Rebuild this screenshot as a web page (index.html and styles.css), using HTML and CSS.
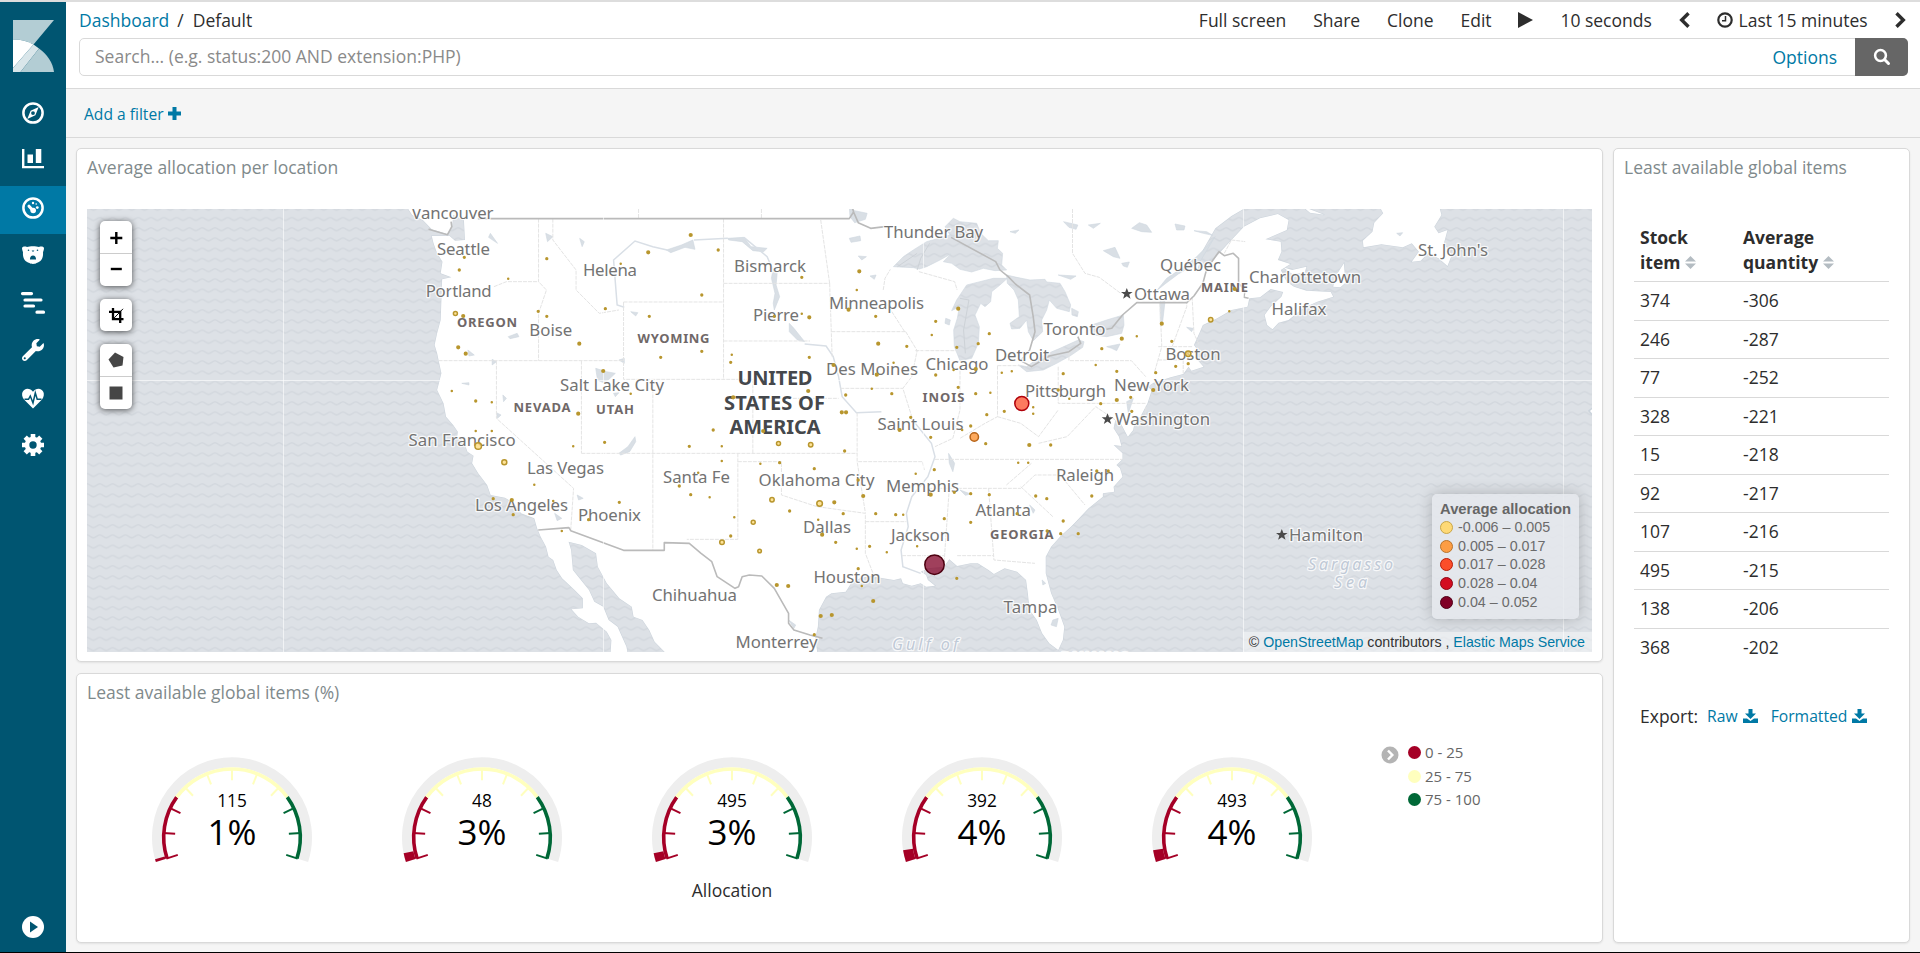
FILE: index.html
```html
<!DOCTYPE html>
<html lang="en">
<head>
<meta charset="utf-8">
<title>Default - Dashboard</title>
<link rel="stylesheet" href="styles.css">
</head>
<body>
<div class="app">
  <nav class="sidebar">
    <div class="logo">
      <svg width="41" height="52" viewBox="0 0 41 52"><path fill="#b3cdd4" d="M0 0H41L20.500 24.500A40 40 0 0 0 0 19.500Z"/><path fill="#fff" d="M0 19.500A40 40 0 0 1 20.500 24.500L0 48Z"/><path fill="#d9e6ea" d="M20.500 24.500L26 28.500L7.500 52H0V48Z"/><path fill="#b3cdd4" d="M26 28.500C34 34 40 43 41 52H7.500Z"/></svg>
    </div>
    <a class="nav-item"><svg viewBox="0 0 22 22"><circle cx="11" cy="11" r="9.600" fill="none" stroke="#fff" stroke-width="2.500"/><path fill="#fff" fill-rule="evenodd" d="M16.700 5L13.400 13.300L5.300 17L8.600 8.700ZM11 9.200A1.900 1.900 0 1 0 11 13A1.900 1.900 0 1 0 11 9.200Z"/></svg></a>
    <a class="nav-item"><svg viewBox="0 0 22 22"><path fill="#fff" d="M0 0H2.400V17H22V19.300H0ZM5.500 5.500H11V14H5.500ZM13.800 0H19.300V14H13.800Z"/></svg></a>
    <a class="nav-item active"><svg viewBox="0 0 22 22"><circle cx="11" cy="11" r="9.600" fill="none" stroke="#fff" stroke-width="2.500"/><path stroke="#fff" stroke-width="3" stroke-linecap="round" d="M10.500 13L7 9.200"/><g fill="#fff"><circle cx="11.200" cy="13.500" r="2.800"/><circle cx="11" cy="6" r="1.200"/><circle cx="14.200" cy="7" r=".8"/><circle cx="15.300" cy="10.600" r="1.400"/></g></svg></a>
    <a class="nav-item"><svg viewBox="0 0 22 22"><path fill="#fff" fill-rule="evenodd" d="M0 4C0 2.500 3 2 5 2.900C8 1.900 14 1.900 17 2.900C19 2 22 2.500 22 4C22 6 21 7.500 21 8.500C21.500 14 19 18 14.500 19C13 20.200 9 20.200 7.500 19C3 18 .5 14 1 8.500C1 7.500 0 6 0 4ZM6.500 5.500A.8 .8 0 1 0 6.500 7.100A.8 .8 0 1 0 6.500 5.500ZM15.500 5.500A.8 .8 0 1 0 15.500 7.100A.8 .8 0 1 0 15.500 5.500ZM9.600 6.500L11 8L12.400 6.500ZM11 11.500C9 11.500 7.800 13.500 8 15.500H14C14.200 13.500 13 11.500 11 11.500Z"/></svg></a>
    <a class="nav-item"><svg viewBox="0 0 22 22"><path stroke="#fff" stroke-width="3.200" stroke-linecap="round" d="M.5 1.600H9.500M3 8H19M3 14H11.500M15 20.200H21.500"/></svg></a>
    <a class="nav-item"><svg viewBox="0 0 512 512"><path fill="#fff" d="M507.700 109.100c-2.200-9-13.500-12.100-20.100-5.500l-74.400 74.400-67.900-11.300-11.300-67.900 74.400-74.400c6.600-6.600 3.400-17.900-5.700-20.200-47.400-11.700-99.600.9-136.600 37.900-39.600 39.600-50.500 97.100-34 147.200L18.700 402.800c-25 25-25 65.500 0 90.500s65.500 25 90.500 0l213.200-213.200c50.100 16.700 107.500 5.700 147.400-34.200 37-37.100 49.700-89.300 37.900-136.800zM64 472c-13.300 0-24-10.800-24-24s10.800-24 24-24 24 10.700 24 24-10.800 24-24 24z"/></svg></a>
    <a class="nav-item"><svg viewBox="0 0 22 22"><path fill="#fff" d="M11 21.500L2 12.500C-3 5.500 3-.5 8.500 2.500Q10 3.300 11 4.800Q12 3.300 13.500 2.500C19-.5 25 5.500 20 12.500Z"/><path fill="none" stroke="#005571" stroke-width="1.500" d="M2.500 12.300H6.500L8.300 9L11 16L13.300 6L15.200 12.300H19.500"/></svg></a>
    <a class="nav-item"><svg viewBox="0 0 22 22"><circle cx="11" cy="11" r="6" fill="none" stroke="#fff" stroke-width="4.600"/><path stroke="#fff" stroke-width="4.600" d="M11 0V4M11 18V22M0 11H4M18 11H22M3.200 3.200L6 6M16 16L18.800 18.800M3.200 18.800L6 16M16 6L18.800 3.200"/></svg></a>
    <a class="nav-item last"><svg viewBox="0 0 22 22"><circle cx="11" cy="11" r="11" fill="#fff"/><path fill="#005571" d="M8 5.500L16 11L8 16.500Z"/></svg></a>
  </nav>
  <main class="main">
    <header class="topbar">
      <div class="toprow">
        <div class="crumbs"><a>Dashboard</a><span class="slash">/</span><span>Default</span></div>
        <div class="menu">
          <span>Full screen</span><span>Share</span><span>Clone</span><span>Edit</span>
          <svg width="15" height="16" viewBox="0 0 15 16"><path fill="#2d2d2d" d="M0 0L15 8L0 16Z"/></svg>
          <span>10 seconds</span>
          <svg width="11" height="16" viewBox="0 0 11 16"><path fill="none" stroke="#2d2d2d" stroke-width="3.400" d="M9.500 1.200L2.700 8L9.500 14.800"/></svg>
          <span class="time"><svg width="16" height="16" viewBox="0 0 16 16"><circle cx="8" cy="8" r="6.700" fill="none" stroke="#2d2d2d" stroke-width="2.200"/><path fill="none" stroke="#2d2d2d" stroke-width="1.500" d="M8.500 4V8.700H5"/></svg>Last 15 minutes</span>
          <svg width="11" height="16" viewBox="0 0 11 16"><path fill="none" stroke="#2d2d2d" stroke-width="3.400" d="M1.500 1.200L8.300 8L1.500 14.800"/></svg>
        </div>
      </div>
      <div class="search">
        <div class="query">Search... (e.g. status:200 AND extension:PHP)</div>
        <a class="options">Options</a>
        <div class="go"><svg width="18" height="18" viewBox="0 0 18 18"><circle cx="7.500" cy="7.500" r="5.400" fill="none" stroke="#fff" stroke-width="2.500"/><path stroke="#fff" stroke-width="3" stroke-linecap="round" d="M11.800 11.800L15.500 15.500"/></svg></div>
      </div>
    </header>
    <div class="filterbar"><a>Add a filter</a><svg width="13" height="13" viewBox="0 0 13 13"><path stroke="#0079a5" stroke-width="4" d="M6.500 0V13M0 6.500H13"/></svg></div>
    <div class="grid">
      <div class="left">
        <section class="panel map-panel">
          <h2>Average allocation per location</h2>
          <div class="map">
            <svg class="canvas" width="1505" height="443" viewBox="87 209 1505 443">
              <defs>
                <pattern id="sea" width="12.800" height="10.240" patternUnits="userSpaceOnUse" x="87" y="214"><rect width="12.800" height="10.240" fill="#dde1e6"/><path d="M0 3.500C2 3.500 4.500 6.500 6.400 6.500S10.800 3.500 12.800 3.500" fill="none" stroke="#d3d8de" stroke-width="1.600"/></pattern>
                <pattern id="lake-sea" href="#sea" patternTransform="scale(3)"/>
                <g id="land">
                  <path transform="translate(80 190) scale(.35714 .33333)" d="M915 50L930 75L960 90L985 118L1030 133L1042 110L1045 75L1075 90L1078 150L1050 152L1035 138L985 138L990 160L1000 190L1015 215L1010 250L1040 262L1014 268L1012 330L1010 390L1000 430L993 465L1000 490L1005 515L1012 550L1005 580L1000 600L1018 640L1025 680L1045 705L1058 725L1056 740L1070 750L1078 765L1085 785L1102 797L1098 820L1115 850L1140 885L1150 915L1190 923L1215 940L1235 970L1272 985L1280 1015L1290 1040L1305 1070L1312 1100L1325 1110L1335 1140L1350 1165L1385 1200L1408 1225L1408 1255L1376 1258L1395 1280L1425 1300L1445 1298L1475 1325L1488 1350L1485 1400H1535L1530 1370L1505 1310L1480 1290L1465 1250L1440 1235L1425 1200L1395 1160L1380 1140L1375 1080L1368 1055L1405 1065L1445 1090L1450 1130L1475 1180L1510 1225L1545 1250L1550 1280L1575 1290L1594 1320L1609 1355L1650 1400H1900V50Z"/>
                  <path transform="translate(560 190) scale(.35714 .33333)" d="M500 50V1400H722L715 1345L722 1310L725 1260L745 1220L760 1210L800 1205L815 1180L840 1165L870 1158L905 1165L935 1170L955 1165L960 1180L985 1187L1010 1180L1025 1190L1050 1187L1030 1170L1025 1155L1010 1145L1030 1135L1075 1130L1090 1108L1112 1128L1150 1120L1170 1120L1200 1140L1215 1152L1245 1135L1280 1145L1305 1170L1310 1210L1315 1260L1335 1290L1350 1330L1370 1360L1395 1380L1408 1350L1412 1310L1395 1260L1375 1210L1360 1150L1360 1100L1375 1070L1400 1040L1440 1000L1480 955L1520 920V50Z"/>
                  <path transform="translate(1060 190) scale(.35714 .33333)" d="M-50 50V1080L0 1037L30 1010L60 975L75 945L100 935L120 910L152 905L150 890L175 860L168 835L158 825L175 808L175 790L150 765L172 768L165 740L150 715L155 690L170 700L190 740L205 720L210 690L225 680L245 640L257 600L245 590L262 578L310 562L345 552L360 530L368 542L402 530L385 510L385 480L375 465L390 430L400 405L440 385L480 360L525 350L530 325L560 322L590 297L625 306L620 320L590 350L573 375L580 405L595 418L612 398L640 390L680 355L720 335L765 320L758 306L690 302L655 290L635 275L618 240L645 222L610 210L620 185L618 155L575 148L635 120L640 90L610 72L560 85L515 110L480 150L450 185L425 215L385 240L400 180L435 115L480 78L525 50Z"/>
                  <path transform="translate(1060 190) scale(.35714 .33333)" d="M765 290L770 262L795 220L797 250L803 275L785 292ZM625 232L650 240L690 230L685 248L650 252ZM680 50L740 74L700 68ZM895 50L905 70L880 98L875 125L848 152L850 172L900 163L960 172L985 160L1005 185L985 215L1010 212L1030 190L1060 205L1085 228L1097 195L1075 160L1085 120L1060 130L1048 110L1068 75L1062 50Z"/>
                  <path d="M1590 411l6 -5v12z"/>
                </g>
              </defs>
              <rect x="87" y="209" width="1505" height="443" fill="url(#sea)"/>
              <use href="#land" class="coast"/>
              <use href="#land" class="ground"/>
              <g class="lakes big" transform="translate(860 200) scale(.33333)">
                <path d="M100 200L130 170L160 150L200 125L270 105L255 80L280 55L300 65L350 70L362 100L385 122L415 122L412 145L428 160L425 195L440 210L405 212L370 205L335 216L300 208L275 190L250 185L272 162L240 180L200 200L178 207L160 203Z"/>
                <path d="M275 332L290 300L320 255L360 245L400 235L442 235L420 255L395 275L392 305L375 320L362 310L345 345L358 380L355 430L335 475L300 482L283 440L281 390L292 355L298 320Z"/>
                <path d="M440 225L470 232L510 240L555 238L560 246L600 250L615 275L632 315L628 335L590 325L568 300L560 330L545 360L548 395L520 422L505 395L500 360L480 385L455 387L450 370L478 350L475 300L462 270L442 250ZM635 325L655 335L652 350L636 345Z"/>
                <path d="M475 495L500 500L530 478L560 462L600 445L655 420L672 425L668 442L630 468L590 490L550 510L500 515Z"/>
                <path d="M690 390L695 375L740 360L790 345L792 375L785 400L740 410L700 405Z"/>
              </g>
              <g class="lakes" transform="translate(560 190) scale(.35714 .33333)">
                <path d="M810 50L825 62L860 70L855 88L825 98L812 80ZM810 145L840 138L842 152L815 157ZM835 198L858 200L845 210ZM868 258L885 255L880 268ZM1410 95L1450 105L1445 118L1425 112ZM1080 385L1093 390L1090 405L1078 400ZM1260 125L1285 120L1275 130ZM1395 255L1445 258L1430 268Z"/>
                <path d="M298 180L340 165L372 150L378 178L350 172L310 188ZM470 145L515 142L535 170L580 175L570 185L540 182L510 155L472 150ZM596 240L608 250L605 285L615 320L600 360L597 340L602 310L592 265ZM642 400L655 415L685 455L665 450L642 425ZM100 535L130 545L155 550L125 580L105 570ZM165 790L190 770L210 740L212 755L195 785L170 795ZM1088 790L1105 820L1100 845L1090 820ZM1315 945L1330 960L1325 970ZM1120 900L1150 912L1135 916ZM198 365L218 368L212 378ZM165 510L180 505V520ZM55 145L68 155L62 170ZM1380 1290L1395 1285L1390 1310L1375 1305ZM1350 1170L1360 1180L1352 1185ZM-195 130L-175 160L-200 142ZM-40 130L-20 140L-35 155ZM-145 440L-120 430L-115 440L-140 446ZM-190 508L-178 515L-190 525ZM-275 580L-255 578V585ZM-160 615L-150 625L-158 635ZM-178 668L-165 675L-175 685ZM-258 480L-240 495L-255 498ZM48 915L65 925L52 930ZM-15 970L5 985L-8 992ZM150 610L165 608L155 620ZM640 1290L660 1305L655 1315Z"/>
              </g>
              <g class="lakes" transform="translate(1100 200) scale(.33333)">
                <path d="M325 135L345 110L300 185L235 222L195 252L170 272L200 235L245 205L290 170ZM180 305L195 305L188 365L181 368ZM95 85L118 68L140 75L155 97L125 95ZM225 72L255 78L252 90L230 90ZM10 152L45 142L60 175L40 170ZM65 190L88 186L82 202L70 198ZM282 92L320 95L338 106L310 100ZM260 382L280 385L275 395ZM20 440L60 432L50 452L35 445ZM1 70L-20 85L-35 75ZM890 100L908 98L900 108ZM80 605L100 595L85 640Z"/>
              </g>
              <g class="rivers" transform="translate(560 190) scale(.35714 .33333)">
                <path d="M300 180L260 170L210 153L150 210L160 345L180 352M375 150L470 145M515 142L580 200L596 240M685 462L745 468L765 500L780 560L790 620L830 668L900 665M980 680L1040 760L1050 800L1030 860L985 920L970 970L975 1010L955 1080L960 1130L1010 1150"/>
              </g>
              <g class="states" transform="translate(560 190) scale(.35714 .33333)">
                <path d="M-60 86V275L-38 300L-60 370V512M-20 86V150L45 240L45 300L110 370L165 360M-185 290L-150 275H-60M-340 512H178M178 336H458M178 336V568H540M458 86V568M458 280H755M458 453H700M60 512V790M-178 512V685L38 895L30 1020M60 790H832M260 568V1081M540 568V790M540 625H780M498 790V1048H355M498 815H620V915L720 950L855 970V1090L880 1160M832 668V815L855 968M835 815H1015L1020 840M785 595H960M760 425H968M755 280L730 90M755 280L762 500M995 482H1110M968 425L1000 482L985 560L960 595L985 680M905 300L910 265L925 238M1005 245L1105 275L1112 300M965 425L908 330M1120 527V660L1100 745L1050 770M1225 527V680L1190 700L1120 745M1225 527H1290M1395 530V640H1640M1425 485V512H1600L1640 560M1050 808H1575M1030 895H1290L1330 855H1400L1470 945M1250 885L1320 820M1090 895L1075 1125M1200 895L1215 1110L1330 1120M958 1097H1075M1112 1097H1215M855 995H970M220 57V86M564 57V86M1435 57V190L1470 250L1510 262L1570 310M1225 680L1290 700L1340 740L1395 660M1340 760L1420 740L1500 650L1555 690M1680 340L1685 470L1665 545M1714 470L1755 350V338M1770 320L1775 430L1790 465M1675 470H1770M1675 510H1745V550M1860 190L1880 150L1920 155M1640 650V720M1290 890L1380 980"/>
              </g>
              <g class="borders" transform="translate(560 190) scale(.35714 .33333)">
                <path d="M-368 118L-315 134L-303 110L-305 95M-230 86H810L822 66L818 50M822 66L835 98L870 115L910 110M1095 142L1220 215L1232 240L1255 260L1275 282L1315 315L1325 380L1330 425L1315 480L1290 512L1320 530L1370 498L1425 485L1458 460L1450 440M1530 418L1545 415L1575 375L1615 338H1755L1775 318L1800 280L1810 240L1825 215L1845 185L1860 197L1885 190L1900 205V280L1918 300L1915 322L1928 325M-61 1020L25 1013L30 1022L178 1081H292V1058L362 1060L395 1090L425 1115L440 1160L490 1195L500 1190L510 1160L530 1155L565 1158L600 1195L640 1270L640 1300L655 1320L700 1335L735 1345"/>
                <path class="thin" d="M1135 490L1130 420L1145 330L1120 325M945 230L1000 190M1000 240L1010 205L1035 160"/>
              </g>
              <path class="tiles" d="M283.500 209V652M603.500 209V652M923.500 209V652M1243.500 209V652M1563.500 209V652M87 380.500H1592"/>
              <g class="city">
                <text x="411.400" y="219.300" textLength="82">Vancouver</text><text x="437" y="254.700" textLength="53">Seattle</text><text x="425.700" y="297.300" textLength="66">Portland</text><text x="582.900" y="276" textLength="54">Helena</text><text x="529.300" y="336" textLength="43">Boise</text><text x="560" y="390.700" textLength="104">Salt Lake City</text><text x="408.600" y="445.700" textLength="107">San Francisco</text><text x="527" y="474.300" textLength="77">Las Vegas</text><text x="475" y="511" textLength="93">Los Angeles</text><text x="578" y="520.700" textLength="63">Phoenix</text><text x="734" y="271.700" textLength="72">Bismarck</text><text x="753" y="321.300" textLength="46">Pierre</text><text x="829" y="309" textLength="95">Minneapolis</text><text x="884" y="238" textLength="99">Thunder Bay</text><text x="826" y="375" textLength="92">Des Moines</text><text x="925.500" y="369.700" textLength="63">Chicago</text><text x="995" y="361" textLength="54">Detroit</text><text x="1043.500" y="335" textLength="62">Toronto</text><text x="1025" y="396.700" textLength="81">Pittsburgh</text><text x="877.500" y="430.300" textLength="86">Saint Louis</text><text x="663" y="482.700" textLength="67">Santa Fe</text><text x="758.500" y="486.300" textLength="116">Oklahoma City</text><text x="886" y="492.300" textLength="73">Memphis</text><text x="975.400" y="516" textLength="55.500">Atlanta</text><text x="1056" y="481.300" textLength="58">Raleigh</text><text x="803" y="532.700" textLength="48">Dallas</text><text x="891" y="540.700" textLength="59">Jackson</text><text x="813.500" y="583.300" textLength="67">Houston</text><text x="652" y="601" textLength="85">Chihuahua</text><text x="735.500" y="648" textLength="82">Monterrey</text><text x="1003.500" y="613" textLength="54">Tampa</text><text x="1160" y="271.300" textLength="61">Québec</text><text x="1249" y="283.300" textLength="112">Charlottetown</text><text x="1134" y="300" textLength="56">Ottawa</text><text x="1271.500" y="315.300" textLength="55">Halifax</text><text x="1165.500" y="360.300" textLength="55">Boston</text><text x="1114" y="391.300" textLength="75">New York</text><text x="1115" y="425.300" textLength="95">Washington</text><text x="1289" y="540.700" textLength="74">Hamilton</text><text x="1418" y="255.700" textLength="70">St. John's</text>
              </g>
              <g class="state-name">
                <text x="457" y="327" textLength="60">OREGON</text><text x="513.500" y="412.300" textLength="57">NEVADA</text><text x="596" y="414" textLength="38">UTAH</text><text x="637.500" y="343" textLength="72">WYOMING</text><text x="922.500" y="402" textLength="42">INOIS</text><text x="990" y="538.700" textLength="63.500">GEORGIA</text><text x="1201" y="292.300" textLength="47">MAINE</text><text x="1061" y="661" textLength="67">BAHAMAS</text>
              </g>
              <g class="country"><text x="737.500" y="385" textLength="75">UNITED</text><text x="724" y="409.500" textLength="101">STATES OF</text><text x="729.500" y="434.300" textLength="91">AMERICA</text></g>
              <g class="sea-name"><text x="892" y="649.500" textLength="66">Gulf of</text><text x="1308" y="569.500" textLength="85">Sargasso</text><text x="1334" y="588" textLength="33">Sea</text></g>
              <g class="star"><path id="st" d="M1126.800 288l1.600 4h4.200l-3.400 2.600 1.300 4.200-3.700-2.600-3.700 2.600 1.300-4.200-3.400-2.600h4.200z"/><use href="#st" x="-19.300" y="125.300"/><use href="#st" x="155" y="241"/></g>
              <g class="dots" transform="translate(560 190) scale(.35714 .33333)">
                <path class="d3" d="M-145 266h0M170 221h0M-303 603h0M-191 637h0M-236 723h0M-191 723h0M-72 884h0M5 1023h0M-19 933h0M37 769h0M198 611h0M481 494h0M453 769h0M453 813h0M387 848h0M419 922h0M488 982h0M561 821h0M677 371h0M1041 435h0M831 300h0M934 518h0M873 596h0M1265 544h0M1237 548h0M1205 608h0M1325 652h0M1325 671h0M1126 720h0M1283 818h0M1311 818h0M996 851h0M961 974h0M1000 1069h0M915 1087h0M831 1076h0M845 1188h0M723 989h0M1426 626h0M1500 525h0M1615 439h0M1874 364h0M1102 540h0"/>
                <path class="d4" d="M-268 202h0M-282 240h0M-37 206h0M-61 364h0M-37 379h0M127 356h0M-236 633h0M-187 926h0M-131 974h0M166 937h0M80 989h0M443 180h0M397 315h0M250 379h0M397 484h0M282 502h0M125 757h0M362 769h0M429 720h0M334 888h0M366 914h0M677 262h0M600 379h0M698 502h0M884 379h0M971 469h0M1052 394h0M1202 431h0M1171 461h0M1111 472h0M1115 592h0M1052 555h0M1164 611h0M1195 674h0M1244 664h0M929 611h0M982 682h0M800 615h0M1150 708h0M1038 742h0M1192 761h0M797 783h0M712 836h0M615 818h0M643 963h0M793 971h0M884 971h0M835 870h0M772 1057h0M867 1069h0M835 1136h0M712 1334h0M1111 1165h0M1048 839h0M1104 907h0M1150 911h0M1202 914h0M1076 986h0M1150 997h0M1332 918h0M1363 926h0M1409 993h0M1402 1031h0M1451 1031h0M1489 918h0M1503 843h0M1535 843h0M1374 765h0M1280 971h0M1364 1023h0M1409 551h0M1395 600h0M1517 476h0M1559 544h0M1713 454h0M1724 529h0M1759 521h0M1668 548h0M1514 641h0M1598 622h0M1601 664h0M478 1038h0M940 974h0M478 517h0"/>
                <path class="d5" d="M-271 378h0M-285 472h0M-264 491h0M54 461h0M121 543h0M51 671h0M366 135h0M247 187h0M698 382h0M838 244h0M808 359h0M891 461h0M1115 356h0M1164 537h0M766 525h0M887 554h0M695 603h0M485 622h0M569 723h0M789 667h0M801 667h0M951 720h0M1314 765h0M849 918h0M768 937h0M1038 914h0M734 1034h0M607 1185h0M639 1188h0M877 1233h0M730 1278h0M761 1275h0M1573 446h0M1685 401h0M1559 630h0M1661 600h0M1889 297h0M-135 930h0"/>
              </g>
              <g class="rings"><circle cx="455.400" cy="313.500" r="2"/><circle cx="504.300" cy="462.300" r="2.500"/><circle cx="478.200" cy="446" r="3.300"/><circle cx="778.500" cy="443.600" r="2"/><circle cx="810.700" cy="444.800" r="2.200"/><circle cx="772" cy="499.800" r="2.200"/><circle cx="819.600" cy="503.500" r="2.800"/><circle cx="753.200" cy="522.300" r="2"/><circle cx="722" cy="542.300" r="2.300"/><circle cx="759.600" cy="551" r="1.800"/><circle cx="1210.700" cy="319.800" r="2.200"/><circle cx="1188.200" cy="353.800" r="2.700"/></g>
              <circle cx="974.300" cy="437" r="4.200" fill="#fd9a40" fill-opacity=".85" stroke="#b8651a" stroke-width="1.500"/>
              <circle cx="1021.800" cy="403.500" r="7" fill="#fc4e2a" fill-opacity=".75" stroke="#b0000a" stroke-width="1.500"/>
              <circle cx="934.500" cy="564.700" r="9.700" fill="#800026" fill-opacity=".75" stroke="#4d0010" stroke-width="1.500"/>
            </svg>
            <div class="controls">
              <div class="ctl"><span><svg width="14" height="14" viewBox="0 0 14 14"><path stroke="#000" stroke-width="2.400" d="M7.300 2V14M1.300 8H13.300"/></svg></span><span><svg width="14" height="14" viewBox="0 0 14 14"><path stroke="#000" stroke-width="2.400" d="M1.800 6H12.800"/></svg></span></div>
              <div class="ctl"><span><svg width="15" height="15" viewBox="0 0 15 15"><path fill="none" stroke="#000" stroke-width="2.300" d="M4 0V11.200H14.500M0 3.800H11.200V15"/><path stroke="#000" stroke-width="1" d="M4 11.200L14 .8"/></svg></span></div>
              <div class="ctl"><span><svg width="16" height="16" viewBox="0 0 16 16"><path fill="#464646" d="M7 .5L15.500 5L14.500 13.500L5.500 15.500L.5 7.500Z"/></svg></span><span><svg width="14" height="14" viewBox="0 0 14 14"><path fill="#464646" d="M.5 .5H13.500V13.500H.5Z"/></svg></span></div>
            </div>
            <div class="map-legend">
              <b>Average allocation</b>
              <div><i class="y"></i>-0.006 – 0.005</div><div><i class="o"></i>0.005 – 0.017</div><div><i class="r"></i>0.017 – 0.028</div><div><i class="c"></i>0.028 – 0.04</div><div><i class="m"></i>0.04 – 0.052</div>
            </div>
            <div class="attrib">© <a>OpenStreetMap</a> contributors , <a>Elastic Maps Service</a></div>
          </div>
        </section>
        <section class="panel gauge-panel">
          <h2>Least available global items (%)</h2>
          <div class="gauge-body">
            <div class="gauges">
              <div class="gauge-row" id="gauges"></div>
              <div class="gauge-title">Allocation</div>
            </div>
            <svg class="toggle" width="18" height="18" viewBox="0 0 18 18"><circle cx="9" cy="9" r="8.500" fill="#b4b4b4"/><path fill="none" stroke="#fff" stroke-width="2.500" d="M7 4.500L11.300 9L7 13.500"/></svg>
            <div class="key"><div><i class="k1"></i>0 - 25</div><div><i class="k2"></i>25 - 75</div><div><i class="k3"></i>75 - 100</div></div>
          </div>
        </section>
      </div>
      <section class="panel table-panel">
        <h2>Least available global items</h2>
        <table>
          <thead><tr><th>Stock<br>item <svg width="11" height="13" viewBox="0 0 11 13"><path fill="#b4bcc2" d="M5.500 0L11 5.500H0ZM5.500 13L0 7.500H11Z"/></svg></th><th>Average<br>quantity <svg width="11" height="13" viewBox="0 0 11 13"><path fill="#b4bcc2" d="M5.500 0L11 5.500H0ZM5.500 13L0 7.500H11Z"/></svg></th></tr></thead>
          <tbody>
            <tr><td>374</td><td>-306</td></tr><tr><td>246</td><td>-287</td></tr><tr><td>77</td><td>-252</td></tr><tr><td>328</td><td>-221</td></tr><tr><td>15</td><td>-218</td></tr><tr><td>92</td><td>-217</td></tr><tr><td>107</td><td>-216</td></tr><tr><td>495</td><td>-215</td></tr><tr><td>138</td><td>-206</td></tr><tr><td>368</td><td>-202</td></tr>
          </tbody>
        </table>
        <div class="export"><span>Export:</span>
          <a>Raw <svg width="15" height="14" viewBox="0 0 15 14"><path fill="#0079a5" d="M5.500 0H9.500V4.500H13L7.500 10L2 4.500H5.500ZM0 9.500H4L7.500 12L11 9.500H15V14H0Z"/></svg></a>
          <a>Formatted <svg width="15" height="14" viewBox="0 0 15 14"><path fill="#0079a5" d="M5.500 0H9.500V4.500H13L7.500 10L2 4.500H5.500ZM0 9.500H4L7.500 12L11 9.500H15V14H0Z"/></svg></a>
        </div>
      </section>
    </div>
  </main>
</div>
<script src="gauges.js"></script>
</body>
</html>
```

FILE: styles.css
```css
* { box-sizing: border-box; }
body { margin: 0; font-family: "Open Sans", sans-serif; font-size: 17.5px; color: #2d2d2d; background: #f5f5f5; overflow: hidden; }
a { color: #0079a5; text-decoration: none; }
svg { display: block; }
.app { display: flex; height: 953px; border-top: 2px solid #ddd; border-bottom: 1px solid #000; }
.sidebar { width: 66px; background: #005571; display: flex; flex-direction: column; flex: none; }
.logo { height: 89px; padding: 18px 0 0 13px; }
.nav-item { height: 47.5px; padding: 10.5px 22px 0; flex: none; }
.nav-item svg { width: 22px; height: 22px; overflow: visible; }
.nav-item.active { background: #0079a5; }
.nav-item.last { margin-top: auto; height: 46.5px; }
.main { flex: 1; min-width: 0; display: flex; flex-direction: column; }
.topbar { height: 87px; background: #fff; border-bottom: 1px solid #d9d9d9; padding: 0 12px 0 13px; }
.toprow { height: 36px; display: flex; justify-content: space-between; align-items: center; }
.crumbs { white-space: pre; }
.slash { margin: 0 9px 0 8px; }
.menu { display: flex; align-items: center; gap: 26.9px; padding-right: 2.5px; }
.time { display: flex; align-items: center; gap: 6px; }
.search { height: 38px; display: flex; align-items: stretch; border: 1px solid #d9d9d9; border-radius: 5px; }
.query { flex: 1; padding-left: 15px; line-height: 35px; font-size: 17.5px; color: #8a8a8a; }
.options { line-height: 37px; margin-right: 19px; }
.go { width: 53px; margin: -1px; background: #666; border-radius: 0 5px 5px 0; display: flex; align-items: center; justify-content: center; }
.filterbar { height: 49px; border-bottom: 1px solid #d9d9d9; display: flex; align-items: center; gap: 4px; padding: 1px 0 0 18px; font-size: 15.6px; }
.grid { flex: 1; display: flex; gap: 10px; padding: 10px 10px 9px; min-height: 0; }
.left { width: 1527px; display: flex; flex-direction: column; gap: 11px; }
.panel { background: #fff; border: 1px solid #d9d9d9; border-radius: 5px; box-shadow: 0 1px 2px rgba(0,0,0,.08); }
.panel h2 { margin: 0; font-weight: 400; font-size: 17.5px; line-height: 24px; color: #7f8a8c; padding: 6px 10px 0; }
.map-panel { height: 514px; }
.gauge-panel { flex: 1; }
.table-panel { flex: 1; }
.map { position: relative; margin: 30px 0 0 10px; width: 1505px; height: 443px; overflow: hidden; }
.coast { fill: none; stroke: #ccd4dc; stroke-width: 3; }
.ground { fill: #fff; }
.lakes path { fill: #d9dfe5; stroke: #cfd7df; stroke-width: .6; vector-effect: non-scaling-stroke; }
.lakes.big path { fill: url(#lake-sea); }
.rivers path { fill: none; stroke: #d9dfe6; stroke-width: 1.5; vector-effect: non-scaling-stroke; }
.states path { fill: none; stroke: #e4e4e4; stroke-width: 1; stroke-dasharray: 4 1; vector-effect: non-scaling-stroke; }
.borders path { fill: none; stroke: #bababa; stroke-width: 1.6; vector-effect: non-scaling-stroke; stroke-linejoin: round; }
.borders .thin { stroke: #cdd2d7; stroke-width: 1; }
.tiles { stroke: #fff; stroke-opacity: .6; }
.canvas text { font-family: "Noto Sans", sans-serif; paint-order: stroke; stroke: #fff; stroke-opacity: .8; stroke-width: 2.5px; stroke-linejoin: round; }
.city { font-size: 16.8px; fill: #737373; }
.state-name { font-size: 13px; font-weight: 700; fill: #706868; }
.country { font-size: 20px; font-weight: 700; fill: #45484c; }
.sea-name { font-size: 16px; font-style: italic; fill: #bfc9d6; }
.star { fill: #4a4a4a; }
.dots path { fill: none; stroke: #b8962e; stroke-linecap: round; vector-effect: non-scaling-stroke; }
.dots .d3 { stroke-width: 2.5px; }
.dots .d4 { stroke-width: 3.3px; }
.dots .d5 { stroke-width: 4.2px; }
.rings circle { fill: #fed976; fill-opacity: .75; stroke: #b8962e; stroke-width: 1.5; }
.controls { position: absolute; left: 13px; top: 12px; display: flex; flex-direction: column; gap: 13px; }
.ctl { width: 32px; background: #fff; border-radius: 5px; box-shadow: 0 1px 6px rgba(0,0,0,.65); }
.ctl span { height: 32px; display: flex; align-items: center; justify-content: center; }
.ctl span + span { height: 33px; border-top: 1px solid #ccc; }
.map-legend { position: absolute; left: 1345px; top: 285px; width: 147px; height: 125px; padding: 6px 8px; background: rgba(230,233,238,.8); border-radius: 5px; box-shadow: 0 0 15px rgba(0,0,0,.22); font: 14.3px/18.700px "Liberation Sans", sans-serif; color: #6b6b6b; white-space: nowrap; }
.map-legend b { display: block; font-size: 14.8px; line-height: 18px; color: #666; }
.map-legend div { display: flex; align-items: center; gap: 5px; }
.map-legend i { width: 13px; height: 13px; border-radius: 50%; border: 1px solid; }
.y { background: #fed976; border-color: #c9a648 !important; }
.o { background: #fd9d43; border-color: #b8742c !important; }
.r { background: #fc4e2a; border-color: #b81c08 !important; }
.c { background: #d30c20; border-color: #8d0715 !important; }
.m { background: #800026; border-color: #4f0017 !important; }
.attrib { position: absolute; right: 0; bottom: 0; height: 20px; width: 349px; padding-right: 7px; text-align: right; background: rgba(255,255,255,.4); font: 14.2px/20px "Liberation Sans", sans-serif; color: #333; white-space: nowrap; }
.gauge-body { display: flex; align-items: flex-start; padding-left: 30px; }
.gauges { width: 1250px; margin-top: 53px; }
.gauge-row { display: flex; }
.gauge-row svg { width: 250px; height: 108px; flex: none; }
.gauge-row text { text-anchor: middle; fill: #000; }
.gauge-title { text-align: center; line-height: 24px; margin-top: 13px; }
.toggle { margin: 42px 0 0 24px; }
.key { margin: 37px 0 0 9px; font-size: 15px; line-height: 23.500px; color: #666; }
.key div { display: flex; align-items: center; gap: 4px; }
.key i { width: 13px; height: 13px; border-radius: 50%; }
.k1 { background: #a50026; }
.k2 { background: #ffffbe; }
.k3 { background: #006837; }
table { width: 255px; margin: 46px 0 0 20px; border-collapse: collapse; table-layout: fixed; }
th { text-align: left; padding: 0 6px 6px; line-height: 25px; font-weight: 700; }
th:first-child { width: 103px; }
th svg { display: inline-block; margin-left: 0; }
td { height: 38.500px; padding: 0 6px; border-top: 1px solid #d9d9d9; line-height: 25px; }
.export { display: flex; align-items: center; margin: 37px 0 0 26px; line-height: 24px; }
.export a { font-size: 15.7px; margin-left: 9px; display: flex; gap: 5px; align-items: center; }
.export a + a { margin-left: 13px; }
```

FILE: gauges.js
```js
const items = [['115', 1], ['48', 3], ['495', 3], ['392', 4], ['493', 4]];
const CX = 125, CY = 80.3;

// Position on the dial: p runs from 0 to 100 across a 216 degree sweep.
function point(r, p) {
  const a = (198 - p * 2.16) * Math.PI / 180;
  return (CX + r * Math.cos(a)).toFixed(2) + ' ' + (CY - r * Math.sin(a)).toFixed(2);
}

function arc(r, from, to, color, width) {
  const large = (to - from) * 2.16 > 180 ? 1 : 0;
  return `<path fill="none" stroke="${color}" stroke-width="${width}" d="M${point(r, from)}A${r} ${r} 0 ${large} 1 ${point(r, to)}"/>`;
}

function color(p) {
  return p < 25 ? '#a50026' : p < 75 ? '#ffffbe' : '#006837';
}

function gauge([label, value]) {
  let s = arc(75, 0, 100, '#eee', 10) + arc(75, 0, value, '#a50026', 10);
  s += arc(68.3, 0, 25, '#a50026', 3.6) + arc(68.3, 25, 75, '#ffffbe', 3.6) + arc(68.3, 75, 100, '#006837', 3.6);
  for (let p = 0; p <= 100; p += 10) {
    s += `<path stroke="${color(p)}" stroke-width="2" d="M${point(57, p)}L${point(69, p)}"/>`;
  }
  s += `<text x="${CX}" y="49.500" font-size="17.3">${label}</text><text x="${CX}" y="88" font-size="35">${value}%</text>`;
  return `<svg viewBox="0 0 250 108">${s}</svg>`;
}

document.getElementById('gauges').innerHTML = items.map(gauge).join('');
```
